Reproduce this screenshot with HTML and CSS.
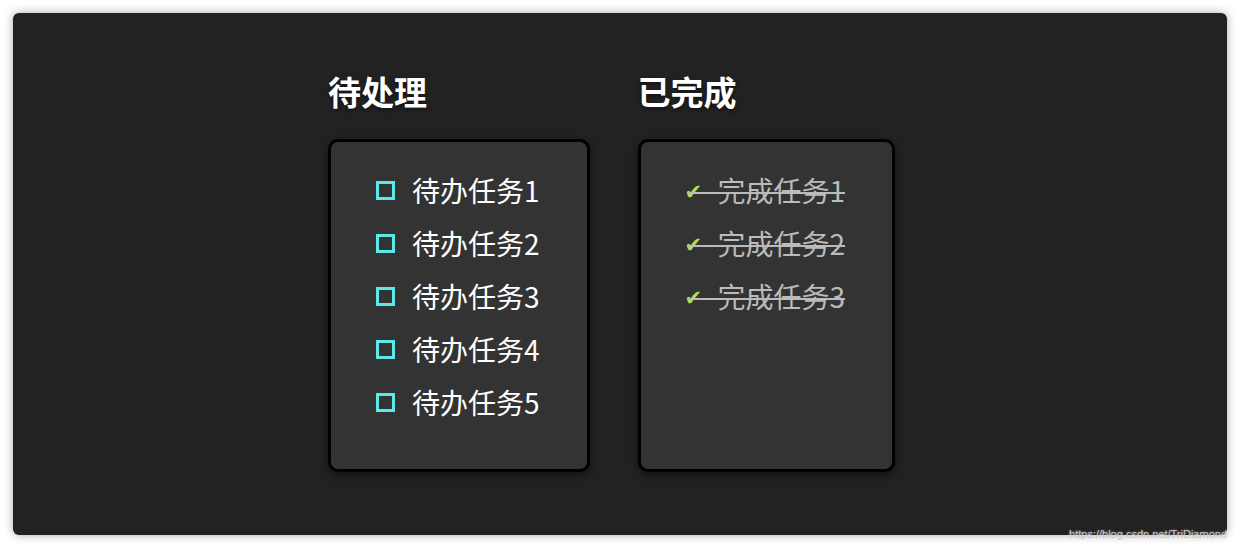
FILE: index.html
```html
<!DOCTYPE html>
<html lang="zh">
<head>
<meta charset="utf-8">
<link rel="stylesheet" href="styles.css">
</head>
<body>
<div class="panel">
  <div class="board">
    <section class="column">
      <h2 class="title">待处理</h2>
      <ul class="card card-todo">
        <li class="todo"><span class="box"></span>待办任务1</li>
        <li class="todo"><span class="box"></span>待办任务2</li>
        <li class="todo"><span class="box"></span>待办任务3</li>
        <li class="todo"><span class="box"></span>待办任务4</li>
        <li class="todo"><span class="box"></span>待办任务5</li>
      </ul>
    </section>
    <section class="column">
      <h2 class="title">已完成</h2>
      <ul class="card card-done">
        <li class="done"><span class="tick">✔</span>完成任务1</li>
        <li class="done"><span class="tick">✔</span>完成任务2</li>
        <li class="done"><span class="tick">✔</span>完成任务3</li>
      </ul>
    </section>
  </div>
  <div class="watermark">https://blog.csdn.net/TriDiamond</div>
</div>
</body>
</html>
```
FILE: styles.css
```css
* { box-sizing: border-box; }
html, body {
  margin: 0;
  padding: 0;
  background: #ffffff;
  font-family: "Noto Sans CJK SC", "Noto Sans", sans-serif;
}
body { padding: 13px; height: 548px; overflow: hidden; }
.panel {
  position: relative;
  height: 522px;
  background: #222222;
  border-radius: 6px;
  box-shadow: 0 0 10px rgba(0, 0, 0, 0.35);
  padding-top: 56px;
}
.board {
  display: flex;
  justify-content: center;
  gap: 48px;
  padding-right: 17px;
}
.column {
  display: flex;
  flex-direction: column;
}
.title {
  margin: 0 0 26px 0;
  color: #ffffff;
  font-size: 33px;
  font-weight: 700;
  line-height: 44px;
  text-shadow: 0 2px 4px rgba(0, 0, 0, 0.5);
}
.card {
  list-style: none;
  margin: 0;
  height: 333px;
  background: #333333;
  border: 3px solid #000000;
  border-radius: 10px;
  box-shadow: 0 3px 8px rgba(0, 0, 0, 0.5);
}
.card-todo { padding: 22px 47px 0 45px; }
.card-done { padding: 22px 47px 0 44px; }
.card li {
  height: 53px;
  line-height: 53px;
  font-size: 28px;
  white-space: nowrap;
}
.todo {
  display: flex;
  align-items: center;
  color: #ffffff;
}
.box {
  width: 19px;
  height: 19px;
  border: 3px solid #5ee8e8;
  margin-right: 17px;
  flex: none;
}
.done {
  position: relative;
  display: flex;
  align-items: center;
  color: #bbbbbb;
}
.done::after {
  content: "";
  position: absolute;
  left: 3px;
  right: 0;
  top: 28px;
  height: 2px;
  background: #bbbbbb;
}
.tick {
  flex: none;
  width: 33px;
  color: #b3e04e;
  font-size: 21px;
  line-height: 53px;
  padding-top: 3px;
  font-family: "DejaVu Sans", sans-serif;
}
.watermark {
  position: absolute;
  right: 0;
  bottom: -6px;
  white-space: nowrap;
  font-family: "Liberation Sans", sans-serif;
  font-size: 11px;
  line-height: 14px;
  color: #c4c4c4;
  text-shadow: 0 0 2px rgba(255, 255, 255, 0.6);
}
```
